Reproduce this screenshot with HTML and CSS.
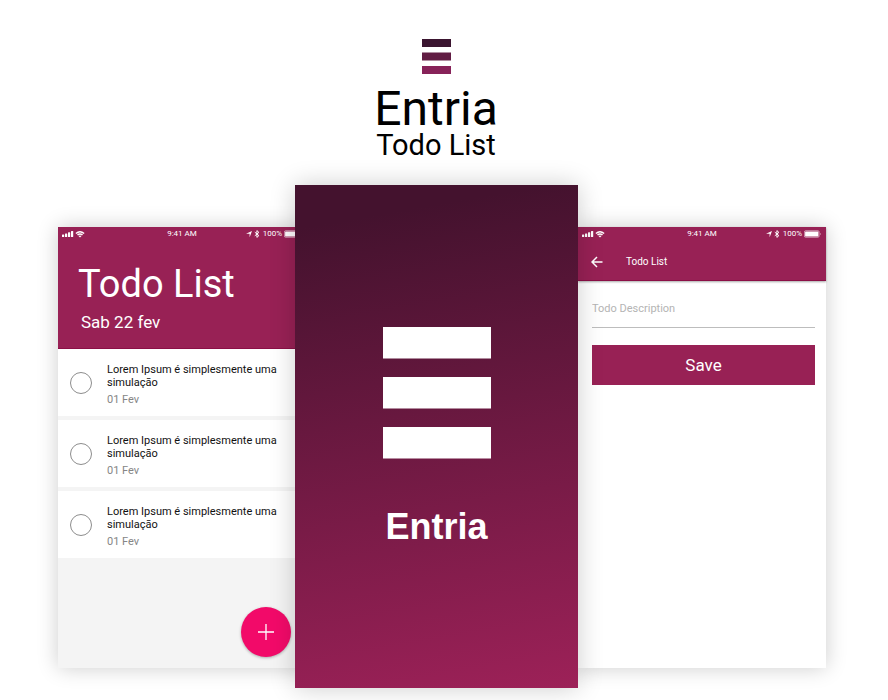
FILE: index.html
```html
<!DOCTYPE html>
<html lang="pt">
<head>
<meta charset="utf-8">
<meta name="viewport" content="width=device-width, initial-scale=1">
<title>Entria Todo List</title>
<link rel="stylesheet" href="styles.css">
</head>
<body>
<svg class="sprite" aria-hidden="true">
  <symbol id="signal" viewBox="0 0 12 8">
    <rect x="0" y="4.500" width="2.200" height="2.500" rx=".5"/><rect x="3" y="3.500" width="2.200" height="3.500" rx=".5"/><rect x="6" y="2.200" width="2.200" height="4.800" rx=".5"/><rect x="9" y="1" width="2.200" height="6" rx=".5"/>
  </symbol>
  <symbol id="wifi" viewBox="0 0 10 8">
    <path d="M.4 2.900Q5-1.100 9.600 2.900L8.600 4Q5 1 1.400 4zM2 4.600Q5 2.100 8 4.600L7 5.600Q5 4 3 5.600zM3.500 6Q5 4.900 6.500 6L5 7.500z"/>
  </symbol>
  <symbol id="location" viewBox="0 0 8 8"><path d="M7 1 4.600 7.200V3.700H1z"/></symbol>
  <symbol id="bluetooth" viewBox="0 0 6 8"><path d="M.8 2.200 4.900 5.600 2.900 7.400V.6L4.900 2.400.8 5.800" fill="none" stroke="currentColor" stroke-width="1"/></symbol>
  <symbol id="battery" viewBox="0 0 18 8">
    <rect x=".4" y=".7" width="14.700" height="6.600" rx="1.200" fill="none" stroke="currentColor" stroke-width=".5"/><rect x="1.100" y="1.400" width="13.300" height="5.200" rx=".6"/><path d="M16 3q1.200 1 0 2z"/>
  </symbol>
</svg>
<main class="page">
  <header class="brand">
    <svg class="brand-mark" viewBox="0 0 29 35" aria-hidden="true">
      <rect width="29" height="8" fill="#3b1530"/><rect y="13.500" width="29" height="8" fill="#611c43"/><rect y="27" width="29" height="8" fill="#872259"/>
    </svg>
    <h1 class="brand-name">Entria</h1>
    <p class="brand-product">Todo List</p>
  </header>

  <div class="showcase">
    <section class="screen list-screen">
      <div class="hero">
        <div class="status">
          <span class="status-left"><svg class="i-signal"><use href="#signal"/></svg><svg class="i-wifi"><use href="#wifi"/></svg></span>
          <span>9:41 AM</span>
          <span class="status-right"><svg class="i-location"><use href="#location"/></svg><svg class="i-bluetooth"><use href="#bluetooth"/></svg><span>100%</span><svg class="i-battery"><use href="#battery"/></svg></span>
        </div>
        <h2 class="hero-title">Todo List</h2>
        <p class="hero-date">Sab 22 fev</p>
      </div>
      <ul class="todos">
        <li><label class="todo"><input class="check" type="checkbox"><span class="todo-body"><span class="todo-text">Lorem Ipsum é simplesmente uma simulação</span><span class="todo-date">01 Fev</span></span></label></li>
        <li><label class="todo"><input class="check" type="checkbox"><span class="todo-body"><span class="todo-text">Lorem Ipsum é simplesmente uma simulação</span><span class="todo-date">01 Fev</span></span></label></li>
        <li><label class="todo"><input class="check" type="checkbox"><span class="todo-body"><span class="todo-text">Lorem Ipsum é simplesmente uma simulação</span><span class="todo-date">01 Fev</span></span></label></li>
      </ul>
      <button class="add" type="button" aria-label="Add"><svg viewBox="0 0 18 18" aria-hidden="true"><path d="M9 1v16M1 9h16"/></svg></button>
    </section>

    <section class="splash">
      <svg class="splash-mark" viewBox="0 0 108 132" aria-hidden="true">
        <rect width="108" height="31.500"/><rect y="50" width="108" height="31.500"/><rect y="100" width="108" height="31.500"/>
      </svg>
      <p class="splash-name">Entria</p>
    </section>

    <section class="screen form-screen">
      <div class="bar">
        <div class="status">
          <span class="status-left"><svg class="i-signal"><use href="#signal"/></svg><svg class="i-wifi"><use href="#wifi"/></svg></span>
          <span>9:41 AM</span>
          <span class="status-right"><svg class="i-location"><use href="#location"/></svg><svg class="i-bluetooth"><use href="#bluetooth"/></svg><span>100%</span><svg class="i-battery"><use href="#battery"/></svg></span>
        </div>
        <div class="toolbar">
          <button class="back" type="button" aria-label="Back"><svg viewBox="0 0 12 12" aria-hidden="true"><path d="M11.500 6H1.200M6 1 1 6l5 5"/></svg></button>
          <h2 class="toolbar-title">Todo List</h2>
        </div>
      </div>
      <form class="form">
        <input class="field" type="text" placeholder="Todo Description" aria-label="Todo Description">
        <button class="save" type="button">Save</button>
      </form>
    </section>
  </div>
</main>
</body>
</html>
```
FILE: styles.css
```css
* { box-sizing: border-box; }

body {
  margin: 0;
  background: #fff;
  color: #000;
  font-family: Roboto, "Liberation Sans", sans-serif;
}

h1, h2, p, ul { margin: 0; padding: 0; font-weight: 400; }
ul { list-style: none; }
svg { display: block; fill: currentColor; }
button { border: 0; padding: 0; font: inherit; color: inherit; cursor: pointer; }

.sprite { position: absolute; width: 0; height: 0; }

.page { padding: 39px 62px 12px 58px; overflow: hidden; }

/* Brand */
.brand {
  display: flex;
  flex-direction: column;
  align-items: center;
  padding-right: 12px;
}
.brand-mark { width: 29px; height: 35px; }
.brand-name { margin-top: 10px; font-size: 48px; line-height: 50px; }
.brand-product { font-size: 29px; line-height: 22px; }

/* Phones */
.showcase { display: flex; align-items: center; margin-top: 29px; }
.screen {
  flex: 248 1 0;
  min-width: 0;
  min-height: 441px;
  margin-top: 21px;
  display: flex;
  flex-direction: column;
  box-shadow: 0 0 20px rgba(0, 0, 0, .2);
}
.list-screen { background: #f4f4f4; }
.form-screen { background: #fff; }

.status {
  display: grid;
  grid-template-columns: 1fr auto 1fr;
  align-items: center;
  height: 14px;
  padding: 0 4px;
  font-size: 8px;
  line-height: 12px;
}
.status-left, .status-right { display: flex; align-items: center; }
.status-left { gap: 1px; }
.status-right { justify-content: flex-end; gap: 1px; }
.i-signal { width: 12px; height: 8px; }
.i-wifi { width: 10px; height: 8px; }
.i-location { width: 8px; height: 8px; }
.i-bluetooth { width: 6px; height: 8px; margin-right: 2px; }
.i-battery { width: 18px; height: 8px; margin-left: 1px; }

.hero {
  height: 122px;
  background: #982155;
  border-bottom: 1px solid #8b0f46;
  color: #fff;
}
.hero-title { margin: 20px 0 0 20px; font-size: 38px; line-height: 46px; }
.hero-date { margin: 5px 0 0 23px; font-size: 17px; line-height: 20px; }

.todos { display: grid; gap: 4px; }
.todo {
  display: flex;
  align-items: center;
  gap: 15px;
  height: 67px;
  padding: 2px 12px 0;
  background: #fff;
}
.check {
  appearance: none;
  flex: none;
  width: 22px;
  height: 22px;
  margin: 0;
  border: 1px solid #8d8d8d;
  border-radius: 50%;
}
.todo-body { display: flex; flex-direction: column; gap: 4px; padding-top: 2px; }
.todo-text { font-size: 11px; line-height: 13px; color: #111; }
.todo-date { font-size: 11px; line-height: 13px; color: #868686; }

.add {
  display: grid;
  place-items: center;
  width: 50px;
  height: 50px;
  margin: auto 15px 11px auto;
  border-radius: 50%;
  background: #f20a69;
  color: #fff;
  box-shadow: 0 1px 3px rgba(0, 0, 0, .3);
}
.add svg { width: 18px; height: 18px; stroke: currentColor; stroke-width: 1.300; }

.splash {
  position: relative;
  z-index: 1;
  flex: 283 1 0;
  min-width: 0;
  min-height: 503px;
  margin-left: -11px;
  padding-top: 142px;
  display: flex;
  flex-direction: column;
  align-items: center;
  background: linear-gradient(170deg, #44122e 8%, #9d2158 100%);
  color: #fff;
  box-shadow: 0 0 24px rgba(0, 0, 0, .2);
}
.splash-mark { width: 108px; height: 132px; }
.splash-name {
  margin-top: 46px;
  font-family: "Liberation Sans", sans-serif;
  font-size: 36px;
  font-weight: 700;
  line-height: 44px;
}

.bar {
  background: #982155;
  color: #fff;
  border-bottom: 1px solid #8b0f46;
  box-shadow: 0 1px 2px rgba(0, 0, 0, .35);
}
.toolbar { display: flex; align-items: center; gap: 23px; height: 39px; padding: 4px 13px 0; }
.back { background: none; }
.back svg { width: 12px; height: 12px; fill: none; stroke: currentColor; stroke-width: 1.500; }
.toolbar-title { font-size: 10px; line-height: 14px; }

.form { display: flex; flex-direction: column; gap: 17px; padding: 10px 11px 10px 14px; }
.field {
  width: 100%;
  height: 37px;
  padding: 0;
  border: 0;
  border-bottom: 1px solid #bdbdbd;
  border-radius: 0;
  background: none;
  font: 11px/14px Roboto, "Liberation Sans", sans-serif;
}
.field::placeholder { color: #b4b4b4; opacity: 1; }
.save { height: 40px; background: #982155; color: #fff; font-size: 17px; line-height: 20px; }
```
